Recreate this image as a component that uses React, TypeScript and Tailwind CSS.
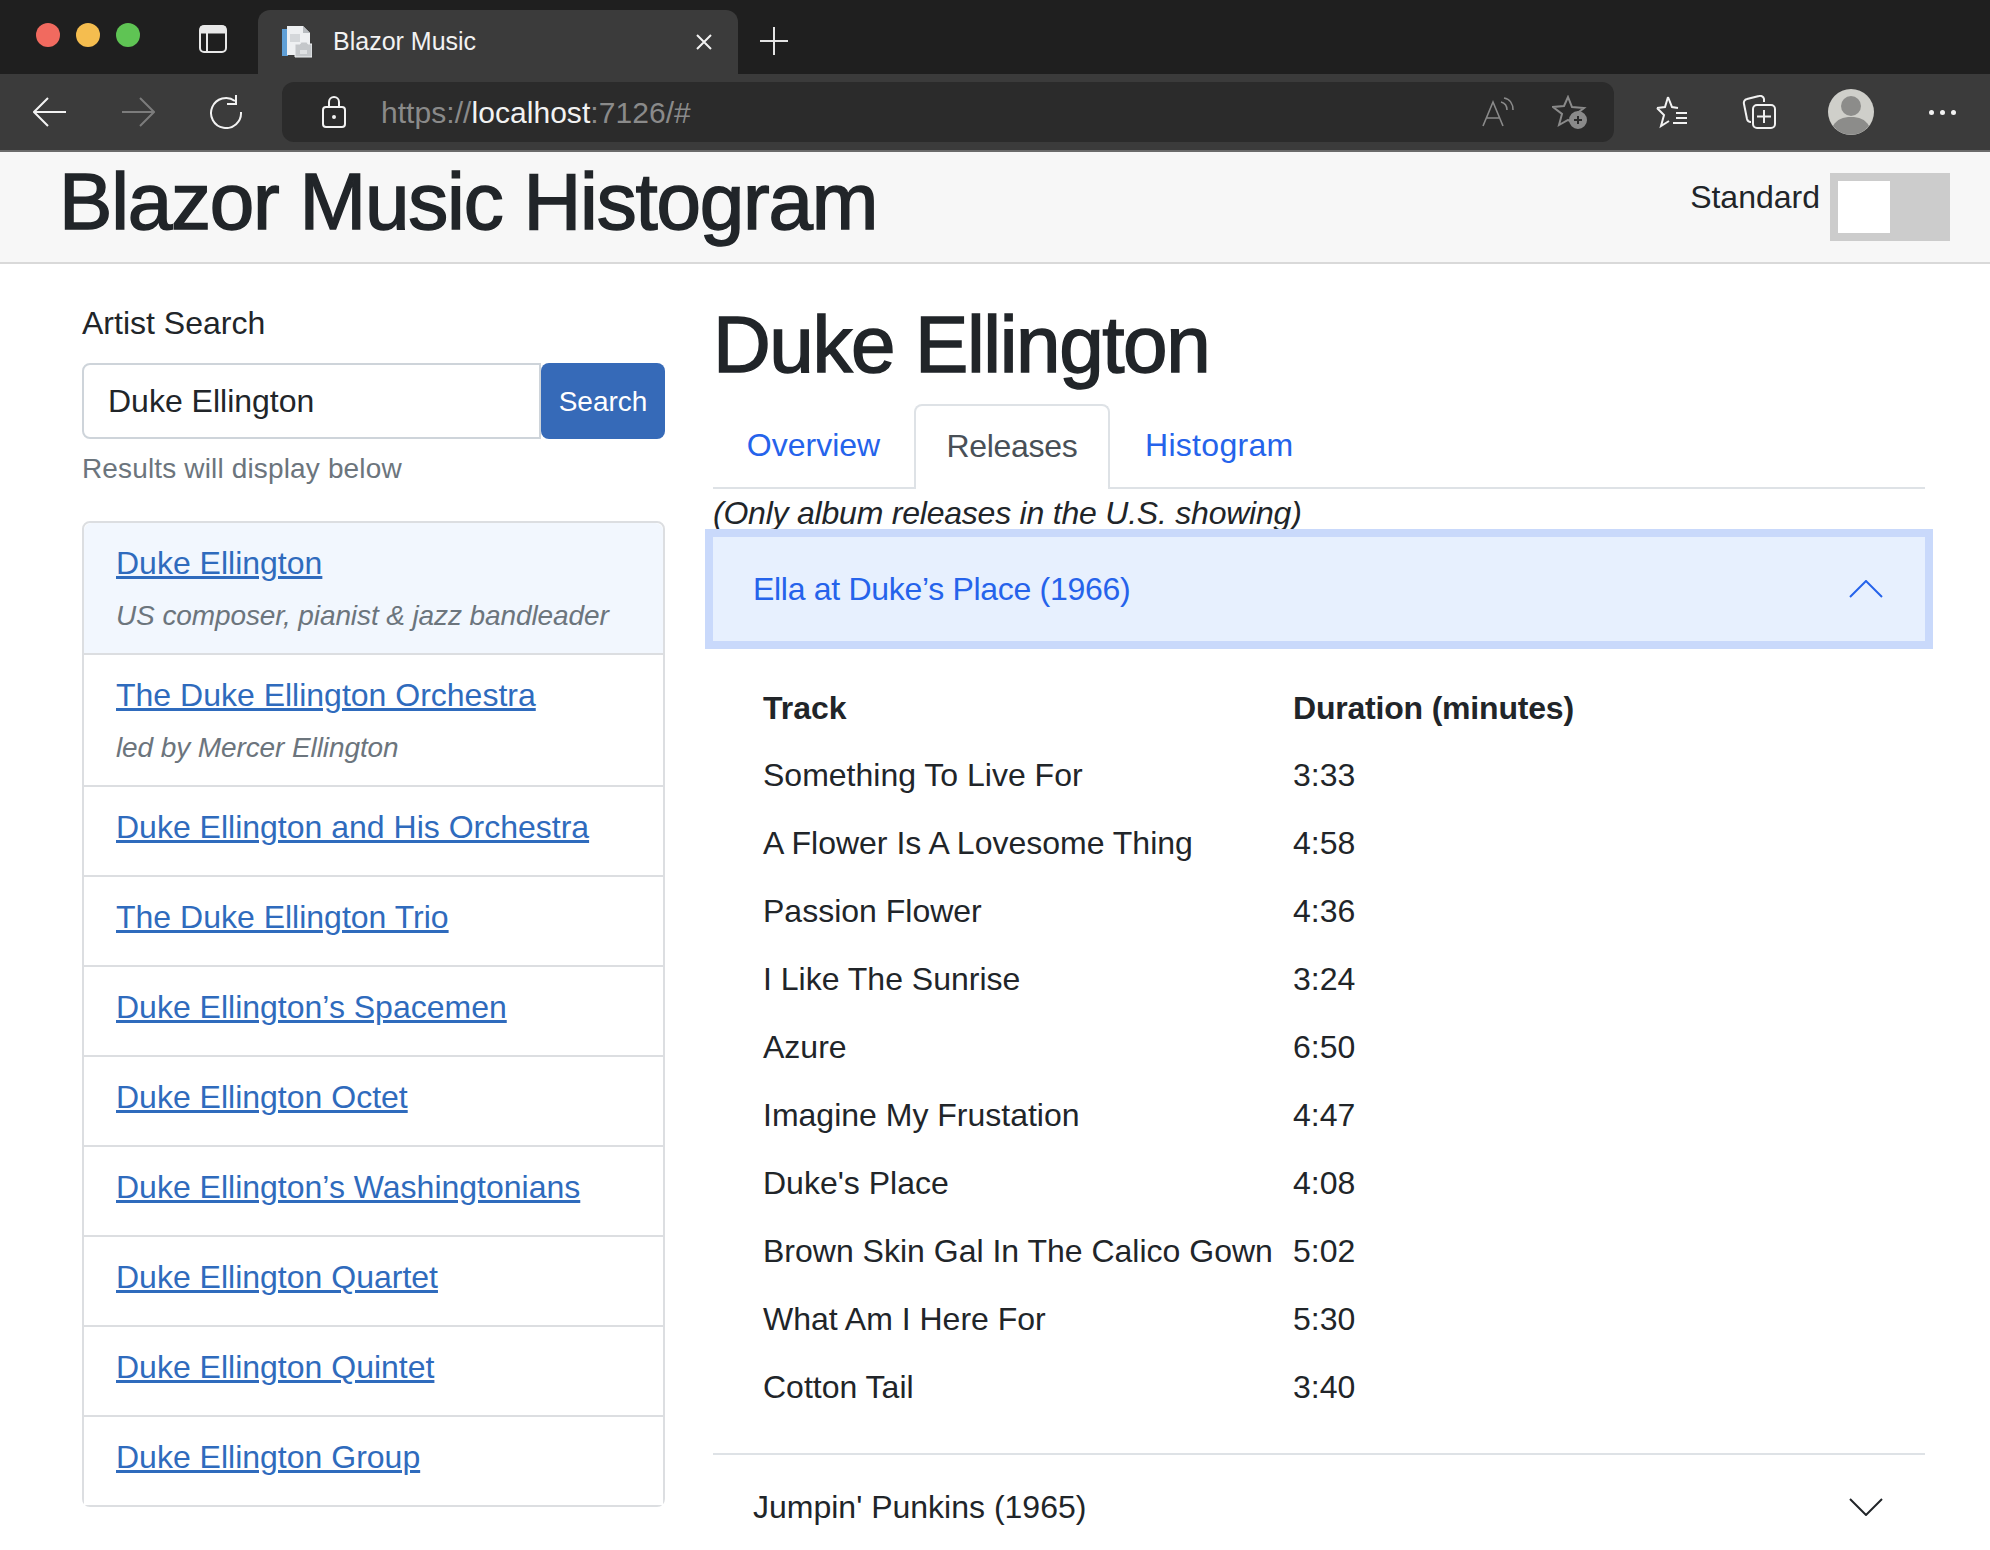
const artists = [
  { name: 'Duke Ellington', note: 'US composer, pianist & jazz bandleader', active: true },
  { name: 'The Duke Ellington Orchestra', note: 'led by Mercer Ellington' },
  { name: 'Duke Ellington and His Orchestra' },
  { name: 'The Duke Ellington Trio' },
  { name: 'Duke Ellington’s Spacemen' },
  { name: 'Duke Ellington Octet' },
  { name: 'Duke Ellington’s Washingtonians' },
  { name: 'Duke Ellington Quartet' },
  { name: 'Duke Ellington Quintet' },
  { name: 'Duke Ellington Group' },
];

const tracks = [
  ['Something To Live For', '3:33'],
  ['A Flower Is A Lovesome Thing', '4:58'],
  ['Passion Flower', '4:36'],
  ['I Like The Sunrise', '3:24'],
  ['Azure', '6:50'],
  ['Imagine My Frustation', '4:47'],
  ["Duke's Place", '4:08'],
  ['Brown Skin Gal In The Calico Gown', '5:02'],
  ['What Am I Here For', '5:30'],
  ['Cotton Tail', '3:40'],
];

function Chevron({ up }: { up?: boolean }) {
  return (
    <svg width="34" height="18" viewBox="0 0 34 18" fill="none" stroke="currentColor" strokeWidth="2">
      <path d={up ? 'M1 17L17 1l16 16' : 'M1 1l16 16L33 1'} />
    </svg>
  );
}

function BrowserChrome() {
  return (
    <div>
      {/* Tab strip */}
      <div className="flex h-[74px] items-end bg-[#1f1f1f]">
        <div className="flex h-[70px] shrink-0 items-center self-start pl-9">
          <span className="h-6 w-6 shrink-0 rounded-full bg-[#f16a5f]" />
          <span className="ml-4 h-6 w-6 shrink-0 rounded-full bg-[#f5bd4f]" />
          <span className="ml-4 h-6 w-6 shrink-0 rounded-full bg-[#5fc454]" />
          <svg className="ml-[58px] mt-2 shrink-0" width="30" height="30" viewBox="0 0 30 30" fill="none" stroke="#e8e8e8" strokeWidth="2">
            <rect x="2" y="2" width="26" height="26" rx="4" />
            <path d="M2 6h26" strokeWidth="7" />
            <path d="M9 8v20" />
          </svg>
        </div>
        <div className="ml-[30px] flex h-[64px] w-[480px] shrink-0 items-center rounded-t-xl bg-[#3b3b3b] pl-[22px] pr-6">
          <svg width="32" height="32" viewBox="0 0 32 32">
            <path d="M2 3h6v27H2z" fill="#5f9fd6" />
            <path d="M7 0h16l7 7v22H7z" fill="#eef0f2" />
            <path d="M23 0v7h7z" fill="#b8bcc0" />
            <path d="M10 8h10v8H10z" fill="#d4d7da" />
            <path d="M15 18h5l1-2h6l1 2h4v13H15z" fill="#c4c7ca" stroke="#eef0f2" />
            <path d="M20 24h7v4h-7z" fill="#dfe1e3" />
          </svg>
          <span className="ml-[21px] flex-1 text-[25px] text-[#f2f2f2]">Blazor Music</span>
          <svg width="20" height="20" viewBox="0 0 20 20" stroke="#f2f2f2" strokeWidth="2">
            <path d="M3 3l14 14M17 3L3 17" />
          </svg>
        </div>
        <svg className="mb-[18px] ml-[21px]" width="30" height="30" viewBox="0 0 30 30" stroke="#e4e4e4" strokeWidth="2">
          <path d="M15 1v28M1 15h28" />
        </svg>
      </div>

      {/* Address bar */}
      <div className="flex h-[76px] items-center bg-[#3b3b3b]">
        <svg className="ml-[33px]" width="34" height="30" viewBox="0 0 34 30" fill="none" stroke="#f2f2f2" strokeWidth="2">
          <path d="M1 15h32M15 1L1 15l14 14" />
        </svg>
        <svg className="ml-[54px]" width="34" height="30" viewBox="0 0 34 30" fill="none" stroke="#7c7c7c" strokeWidth="2">
          <path d="M1 15h32M19 1l14 14-14 14" />
        </svg>
        <svg className="ml-[54px]" width="34" height="34" viewBox="0 0 34 34" fill="none" stroke="#f2f2f2" strokeWidth="2">
          <path d="M26 6a15 15 0 1 0 6 11" />
          <path d="M18 9h9V0" />
        </svg>
        <div className="ml-[39px] flex h-[60px] w-[1332px] shrink-0 items-center rounded-xl bg-[#2b2b2b] pl-10">
          <svg width="24" height="32" viewBox="0 0 24 32" fill="none" stroke="#f2f2f2" strokeWidth="2">
            <rect x="1" y="11" width="22" height="20" rx="3" />
            <path d="M7 11V6a5 5 0 0 1 10 0v5" />
            <circle cx="12" cy="21" r="1" fill="#f2f2f2" />
          </svg>
          <div className="ml-[35px] flex-1 text-[30px] tracking-[0.05px] text-[#8a8a8a]">
            https://<span className="text-[#f2f2f2]">localhost</span>:7126/#
          </div>
          <svg width="32" height="30" viewBox="0 0 32 30" fill="none" stroke="#8a8a8a" strokeWidth="1.6">
            <path d="M1 29L11 5l10 24M5 21h12" />
            <path d="M19 5c4 1 6 4 6 8M22 1c6 1 9 6 9 12" />
          </svg>
          <svg className="ml-[38px] mr-[26px]" width="36" height="34" viewBox="0 0 36 34" fill="none" stroke="#8a8a8a" strokeWidth="2">
            <path d="M16 2l4 10 12 1-9 7 3 11-10-6-9 5 3-11-9-7 11-1z" />
            <circle cx="26" cy="25" r="8" fill="#8a8a8a" />
            <path d="M26 21v8M22 25h8" stroke="#2b2b2b" />
          </svg>
        </div>
        <svg className="ml-10" width="34" height="34" viewBox="0 0 34 34" fill="none" stroke="#f2f2f2" strokeWidth="2">
          <path d="M14 2l4 10 6 1M3 13l8-1 3-10M3 13l7 7-3 11 8-5" />
          <path d="M22 18h11M22 23h11M19 28h14" />
        </svg>
        <svg className="ml-[54px]" width="34" height="34" viewBox="0 0 34 34" fill="none" stroke="#f2f2f2" strokeWidth="2">
          <path d="M9 27a4 4 0 0 1-4-3L2 9a4 4 0 0 1 3-5l12-3a4 4 0 0 1 5 3v3" />
          <rect x="11" y="10" width="22" height="23" rx="4" />
          <path d="M22 15v13M15 21.500h14" />
        </svg>
        <svg className="ml-[52px]" width="46" height="46" viewBox="0 0 46 46">
          <circle cx="23" cy="23" r="23" fill="#cfcfca" />
          <circle cx="23" cy="17" r="10" fill="#8c8c8a" />
          <path d="M5 37c4-7 10-9 18-9s14 2 18 9a23 23 0 0 1-36 0z" fill="#8c8c8a" />
        </svg>
        <div className="ml-[55px] flex gap-[6px]">
          <span className="h-[5px] w-[5px] rounded-full bg-[#f2f2f2]" />
          <span className="h-[5px] w-[5px] rounded-full bg-[#f2f2f2]" />
          <span className="h-[5px] w-[5px] rounded-full bg-[#f2f2f2]" />
        </div>
      </div>
      <div className="h-[2px] bg-[#6b6b6b]" />
    </div>
  );
}

function SearchColumn() {
  return (
    <div className="w-[583px] shrink-0 pt-[35px]">
      <div className="text-[32px] leading-[48px] text-[#212529]">Artist Search</div>
      <div className="mt-4 flex h-[76px]">
        <div className="flex w-[459px] items-center rounded-l-lg border-2 border-[#ced4da] pl-6 text-[32px] text-[#212529]">
          Duke Ellington
        </div>
        <button className="w-[124px] rounded-lg bg-[#366ab8] pt-[2px] text-[28px] text-white">Search</button>
      </div>
      <div className="mt-[9px] text-[28px] leading-[42px] tracking-[0.15px] text-[#6c757d]">Results will display below</div>
      <div className="mt-[31px] rounded-lg border-2 border-[#dcdee1]">
        {artists.map((artist, i) => (
          <div
            key={artist.name}
            className={`flex flex-col px-8 pt-4 ${i > 0 ? 'border-t-2 border-[#dcdee1]' : ''} ${
              artist.active ? 'rounded-t-lg bg-[#f2f7fe]' : 'bg-white'
            } ${i === 0 ? 'h-[130px]' : artist.note ? 'h-[132px]' : 'h-[90px]'}`}
          >
            <a className="text-[32px] leading-[48px] text-[#2f6bbd] underline decoration-[3px]" href="#">
              {artist.name}
            </a>
            {artist.note && (
              <div className="mt-2 text-[28px] italic leading-[42px] tracking-[-0.1px] text-[#6c757d]">{artist.note}</div>
            )}
          </div>
        ))}
      </div>
    </div>
  );
}

function ReleasesColumn() {
  return (
    <div className="ml-[48px] w-[1212px] pt-[33px]">
      <h1 className="text-[80px] font-medium leading-[96px] tracking-[-1.4px] text-[#212529] [-webkit-text-stroke:1.5px_#212529]">
        Duke Ellington
      </h1>

      {/* Tabs */}
      <div className="mt-[11px] flex h-[85px] border-b-2 border-[#dee2e6] text-[32px]">
        <a className="flex w-[201px] items-center justify-center pb-[2px] text-[#2563eb]" href="#">Overview</a>
        <a className="z-10 flex h-[85px] w-[196px] items-center justify-center rounded-t-lg border-2 border-b-0 border-[#dee2e6] bg-white pb-1 tracking-[-0.3px] text-[#495057]" href="#">Releases</a>
        <a className="flex items-center pb-[2px] pl-[35px] tracking-[0.3px] text-[#2563eb]" href="#">Histogram</a>
      </div>
      <div className="text-[32px] italic leading-[48px] tracking-[-0.22px] text-[#212529]">(Only album releases in the U.S. showing)</div>

      {/* Accordion */}
      <div className="relative flex h-[104px] items-center justify-between bg-[#e7f0fe] pl-10 pr-[42px] text-[32px] text-[#2563eb] shadow-[0_0_0_8px_#c9d9fb]">
        <span className="tracking-[-0.3px]">Ella at Duke’s Place (1966)</span>
        <Chevron up />
      </div>
      <table className="ml-[34px] mt-[34px] text-[32px] text-[#212529]">
        <thead>
          <tr className="h-[66px] text-left">
            <th className="w-[530px] pl-4 font-bold">Track</th>
            <th className="px-4 font-bold tracking-[-0.2px]">Duration (minutes)</th>
          </tr>
        </thead>
        <tbody>
          {tracks.map(([title, time]) => (
            <tr key={title} className="h-[68px]">
              <td className="whitespace-nowrap pl-4">{title}</td>
              <td className="px-4">{time}</td>
            </tr>
          ))}
        </tbody>
      </table>
      <div className="mt-8 border-t-2 border-[#dee2e6]" />
      <div className="flex h-[104px] items-center justify-between pl-10 pr-[42px] text-[32px] text-[#212529]">
        <span>Jumpin' Punkins (1965)</span>
        <Chevron />
      </div>
    </div>
  );
}

export default function App() {
  return (
    <div className="h-[1550px] w-[1990px] overflow-hidden bg-white font-['Liberation_Sans',Arial,sans-serif]">
      <BrowserChrome />
      <header className="flex h-[112px] items-start justify-between border-b-2 border-[#d9d9d9] bg-[#f7f7f7] pl-[59px] pr-10">
        <div className="pt-[2px] text-[80px] font-medium leading-[96px] tracking-[-1.2px] text-[#212529] [-webkit-text-stroke:1.5px_#212529]">
          Blazor Music Histogram
        </div>
        <div className="mt-[21px] flex">
          <span className="text-[32px] leading-[48px] text-[#212529]">Standard</span>
          <div className="ml-[10px] h-[68px] w-[120px] bg-[#cccccc] py-2 pl-2">
            <div className="h-[52px] w-[52px] bg-white" />
          </div>
        </div>
      </header>
      <main className="flex pl-[82px]">
        <SearchColumn />
        <ReleasesColumn />
      </main>
    </div>
  );
}
